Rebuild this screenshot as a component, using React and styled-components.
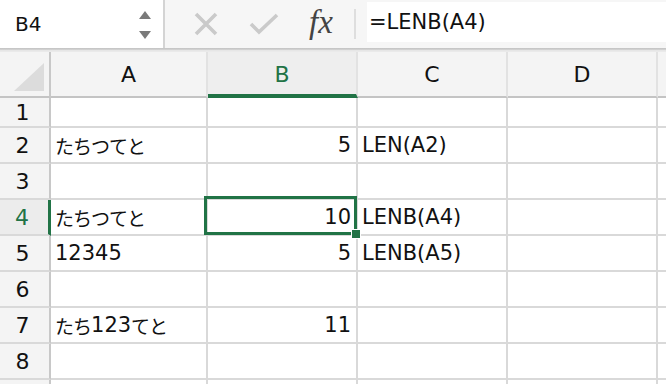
import React from 'react'
import styled, { createGlobalStyle } from 'styled-components'

const GREEN = '#217346'
const GRID = '#d9d9d9'

const GlobalStyle = createGlobalStyle`
	html, body {
		margin: 0;
		padding: 0;
		background: #ffffff;
		overflow: hidden;
	}
	body {
		font-family: "DejaVu Sans", "Noto Sans CJK JP", sans-serif;
		color: #111;
	}
`

const columns = ['A', 'B', 'C', 'D', '']

const rows = [
	{ n: 1, h: 30, cells: [null, null, null, null, null] },
	{ n: 2, h: 36, cells: [{ jp: [['たちつてと', true]] }, { num: '5' }, { text: 'LEN(A2)' }, null, null] },
	{ n: 3, h: 36, cells: [null, null, null, null, null] },
	{ n: 4, h: 36, cells: [{ jp: [['たちつてと', true]] }, { num: '10', active: true }, { text: 'LENB(A4)' }, null, null] },
	{ n: 5, h: 36, cells: [{ text: '12345' }, { num: '5' }, { text: 'LENB(A5)' }, null, null] },
	{ n: 6, h: 36, cells: [null, null, null, null, null] },
	{ n: 7, h: 36, cells: [{ jp: [['たち', true], ['123', false], ['てと', true]] }, { num: '11' }, null, null, null] },
	{ n: 8, h: 36, cells: [null, null, null, null, null] },
	{ n: '', h: 36, cells: [null, null, null, null, null] },
]

const App = () => {
	return (
		<>
			<GlobalStyle />
			<Window>
				<FormulaBar>
					<NameBox>
						<NameText>B4</NameText>
						<Stepper>
							<svg width="14" height="30" viewBox="0 0 14 30">
								<polygon points="7,1 13,9 1,9" fill="#7a7a7a" />
								<polygon points="1,21 13,21 7,29" fill="#7a7a7a" />
							</svg>
						</Stepper>
					</NameBox>
					<Tools>
						<svg width="24" height="24" viewBox="0 0 24 24">
							<path d="M2 2 L22 22 M22 2 L2 22" stroke="#cacaca" strokeWidth="3.6" />
						</svg>
						<svg width="30" height="22" viewBox="0 0 30 22">
							<path d="M2 11 L10 19 L28 2" stroke="#cacaca" strokeWidth="3.6" fill="none" />
						</svg>
						<Fx>fx</Fx>
					</Tools>
					<Divider />
					<FormulaInput>=LENB(A4)</FormulaInput>
				</FormulaBar>
				<BarEdge />
				<Sheet>
					<Corner>
						<svg width="30" height="28" viewBox="0 0 30 28">
							<polygon points="30,0 30,28 0,28" fill="#dcdcdc" />
						</svg>
					</Corner>
					{columns.map((c) => (
						<ColHeader key={c || 'E'} $selected={c === 'B'}>{c}</ColHeader>
					))}
					{rows.map((row, r) => (
						<React.Fragment key={r}>
							<RowHeader $h={row.h} $selected={row.n === 4}>{row.n}</RowHeader>
							{row.cells.map((cell, i) => (
								<Cell key={i} $h={row.h} $right={cell && cell.num} $active={cell && cell.active}>
									{cell && cell.text}
									{cell && cell.num}
									{cell && cell.jp && cell.jp.map(([t, kana], k) => (
										kana ? <Kana key={k}>{t}</Kana> : <span key={k}>{t}</span>
									))}
									{cell && cell.active && (
										<Selection>
											<FillHandle />
										</Selection>
									)}
								</Cell>
							))}
						</React.Fragment>
					))}
				</Sheet>
			</Window>
		</>
	)
}

const Window = styled.div`
	width: 666px;
	height: 384px;
	overflow: hidden;
	display: flex;
	flex-direction: column;
`

const FormulaBar = styled.div`
	flex-shrink: 0;
	height: 48px;
	display: flex;
	align-items: stretch;
	background: #f6f6f6;
`

const NameBox = styled.div`
	width: 165px;
	display: flex;
	align-items: center;
	justify-content: space-between;
	padding: 0 11px 0 15px;
	box-sizing: border-box;
	background: #ffffff;
	border-right: 2px solid #d4d4d4;
`

const NameText = styled.span`
	font-size: 20px;
	color: #111;
`

const Stepper = styled.div`
	display: flex;
	align-items: center;
	margin-top: 2px;
`

const Tools = styled.div`
	width: 189px;
	display: flex;
	align-items: center;
	gap: 31px;
	padding-left: 29px;
	box-sizing: border-box;
`

const Fx = styled.span`
	font-family: "Liberation Serif", "DejaVu Serif", serif;
	font-style: italic;
	font-size: 33px;
	color: #444;
	margin-left: -1px;
	margin-top: -3px;
`

const Divider = styled.div`
	width: 2px;
	height: 30px;
	align-self: center;
	background: #dedede;
`

const FormulaInput = styled.div`
	flex: 1;
	margin: 2px 0 6px 11px;
	padding-left: 2px;
	display: flex;
	align-items: center;
	background: #ffffff;
	font-size: 21px;
	color: #111;
`

const BarEdge = styled.div`
	flex-shrink: 0;
	height: 4px;
	background: linear-gradient(to bottom, #d0d0d0 0, #bdbdbd 1px, #e4e4e4 2px, #ececec 4px);
`

const Sheet = styled.div`
	flex-shrink: 0;
	display: grid;
	grid-template-columns: 51px 157px 150px 150px 150px 1fr;
	align-content: start;
`

const Corner = styled.div`
	height: 46px;
	box-sizing: border-box;
	background: #f4f4f4;
	border-right: 2px solid #c8c8c8;
	border-bottom: 2px solid #c4c4c4;
	display: flex;
	align-items: flex-end;
	justify-content: flex-end;
	padding: 0 5px 5px 0;
`

const ColHeader = styled.div`
	height: 46px;
	box-sizing: border-box;
	display: flex;
	align-items: center;
	justify-content: center;
	font-size: 22px;
	padding-top: ${(p) => (p.$selected ? '2px' : '0')};
	background: ${(p) => (p.$selected ? '#eeeeee' : '#f4f4f4')};
	color: ${(p) => (p.$selected ? GREEN : '#111')};
	border-right: 2px solid #e2e2e2;
	border-bottom: ${(p) => (p.$selected ? `4px solid ${GREEN}` : '2px solid #c4c4c4')};
`

const RowHeader = styled.div`
	height: ${(p) => p.$h}px;
	box-sizing: border-box;
	display: flex;
	align-items: center;
	justify-content: center;
	padding-right: 4px;
	font-size: 22px;
	background: ${(p) => (p.$selected ? '#ececec' : '#f4f4f4')};
	color: ${(p) => (p.$selected ? GREEN : '#111')};
	border-right: ${(p) => (p.$selected ? `3px solid ${GREEN}` : '2px solid #c8c8c8')};
	border-bottom: 2px solid ${GRID};
`

const Cell = styled.div`
	position: relative;
	z-index: ${(p) => (p.$active ? 2 : 'auto')};
	height: ${(p) => p.$h}px;
	box-sizing: border-box;
	display: flex;
	align-items: center;
	justify-content: ${(p) => (p.$right ? 'flex-end' : 'flex-start')};
	padding: 0 5px 0 4px;
	font-size: 21px;
	white-space: nowrap;
	border-right: 2px solid ${GRID};
	border-bottom: 2px solid ${GRID};
`

const Kana = styled.span`
	font-family: "Noto Sans CJK JP", sans-serif;
	font-size: 19px;
	letter-spacing: -1px;
`

const Selection = styled.div`
	position: absolute;
	top: -4px;
	left: -4px;
	right: -1px;
	bottom: -1px;
	border: 3px solid ${GREEN};
`

const FillHandle = styled.div`
	position: absolute;
	right: -7px;
	bottom: -7px;
	width: 8px;
	height: 8px;
	background: ${GREEN};
	border: 1px solid #ffffff;
`

export default App
